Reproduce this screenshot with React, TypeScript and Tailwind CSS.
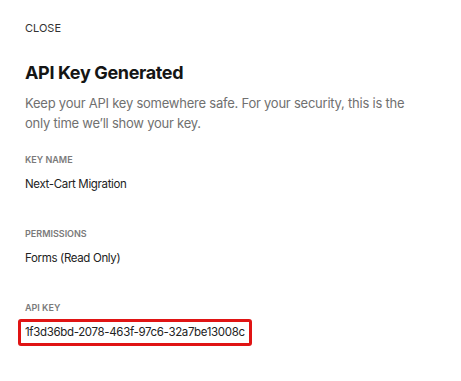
export default function App() {
  const font = { fontFamily: 'Inter, "Noto Sans", sans-serif' };
  return (
    <div className="min-h-screen bg-white px-[25px] pt-[20px] text-[#1c1c1c]" style={font}>
      <button type="button" className="block text-[11px] leading-[16px] text-[#333]">
        CLOSE
      </button>

      <h2 className="mt-[25px] text-[18px] leading-[24px] font-bold tracking-[-0.02em] text-[#151515]">
        API Key Generated
      </h2>
      <p className="mt-[8px] max-w-[395px] text-[13px] leading-[20px] tracking-[-0.018em] text-[#707070]">
        Keep your API key somewhere safe. For your security, this is the only time we’ll show your key.
      </p>

      <div className="mt-[21px]">
        <div className="text-[9px] leading-[12px] font-semibold text-[#7a7a7a] uppercase">Key Name</div>
        <div className="mt-[10px] text-[11.5px] leading-[16px] tracking-[-0.03em] text-[#222]">
          Next-Cart Migration
        </div>
      </div>

      <div className="mt-[36px]">
        <div className="text-[9px] leading-[12px] font-semibold text-[#7a7a7a] uppercase">Permissions</div>
        <div className="mt-[10px] text-[11.5px] leading-[16px] tracking-[-0.03em] text-[#222]">
          Forms (Read Only)
        </div>
      </div>

      <div className="mt-[36px]">
        <div className="text-[9px] leading-[12px] font-semibold text-[#7a7a7a] uppercase">API Key</div>
        <div className="mt-[5px] -ml-[7px] inline-block rounded-[3px] border-[3px] border-[#e01414] px-[4px] py-[2px] text-[11.5px] leading-[17px] tracking-[-0.03em] text-[#222]">
          1f3d36bd-2078-463f-97c6-32a7be13008c
        </div>
      </div>
    </div>
  );
}
